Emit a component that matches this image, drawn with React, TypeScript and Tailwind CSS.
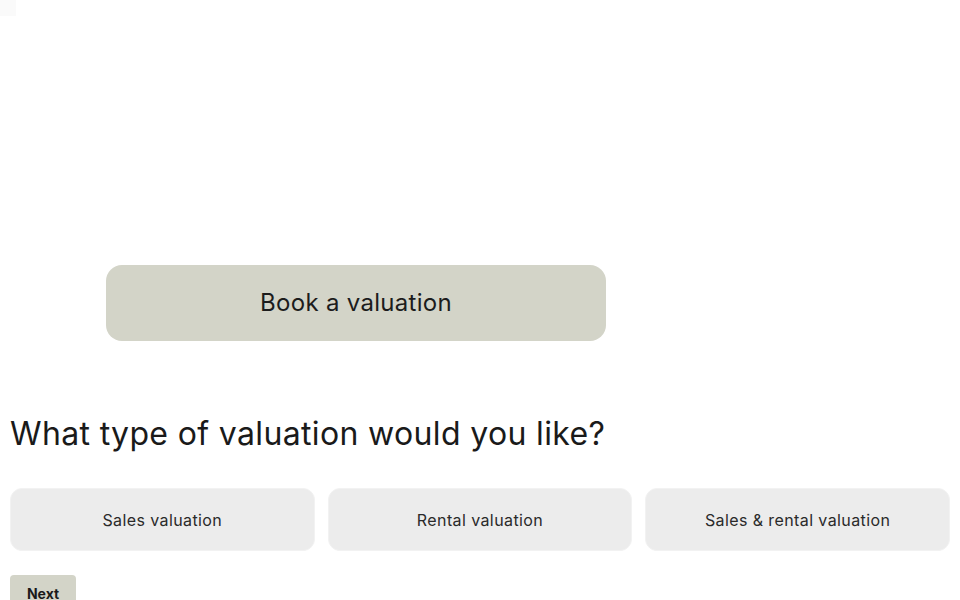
import React, { useState } from "react";

const options = ["Sales valuation", "Rental valuation", "Sales & rental valuation"];

export default function App() {
  const [selected, setSelected] = useState<number | null>(null);

  return (
    <div className="min-h-[600px] bg-white text-[#1a1a1a] font-['Inter',sans-serif] overflow-hidden">
      <div className="w-4 h-4 bg-[#fafafa]" />
      <div className="pt-[249px] pl-[106px]">
        <button className="w-[500px] h-[76px] rounded-2xl bg-[#d3d4c8] text-[24px] text-[#1c1c1c] tracking-[0.3px]">
          Book a valuation
        </button>
      </div>

      <div className="px-[10px]">
        <h2 className="mt-[71px] text-[32px] leading-[44px] text-[#1a1a1a] tracking-[0.35px]">
          What type of valuation would you like?
        </h2>

        <div className="mt-[32px] grid grid-cols-3 gap-[13px]">
          {options.map((o, i) => (
            <button
              key={o}
              onClick={() => setSelected(i)}
              className={`h-[63px] rounded-xl border border-[#f2f2f2] text-[16px] text-[#2a2a2a] tracking-[0.4px] ${
                selected === i ? "bg-[#d3d4c8]" : "bg-[#ececec]"
              }`}
            >
              {o}
            </button>
          ))}
        </div>

        <button className="mt-[24px] w-[66px] h-[30px] rounded bg-[#d3d4c8] text-sm font-bold text-[#1a1a1a] pt-[8px]">
          Next
        </button>
      </div>
    </div>
  );
}
